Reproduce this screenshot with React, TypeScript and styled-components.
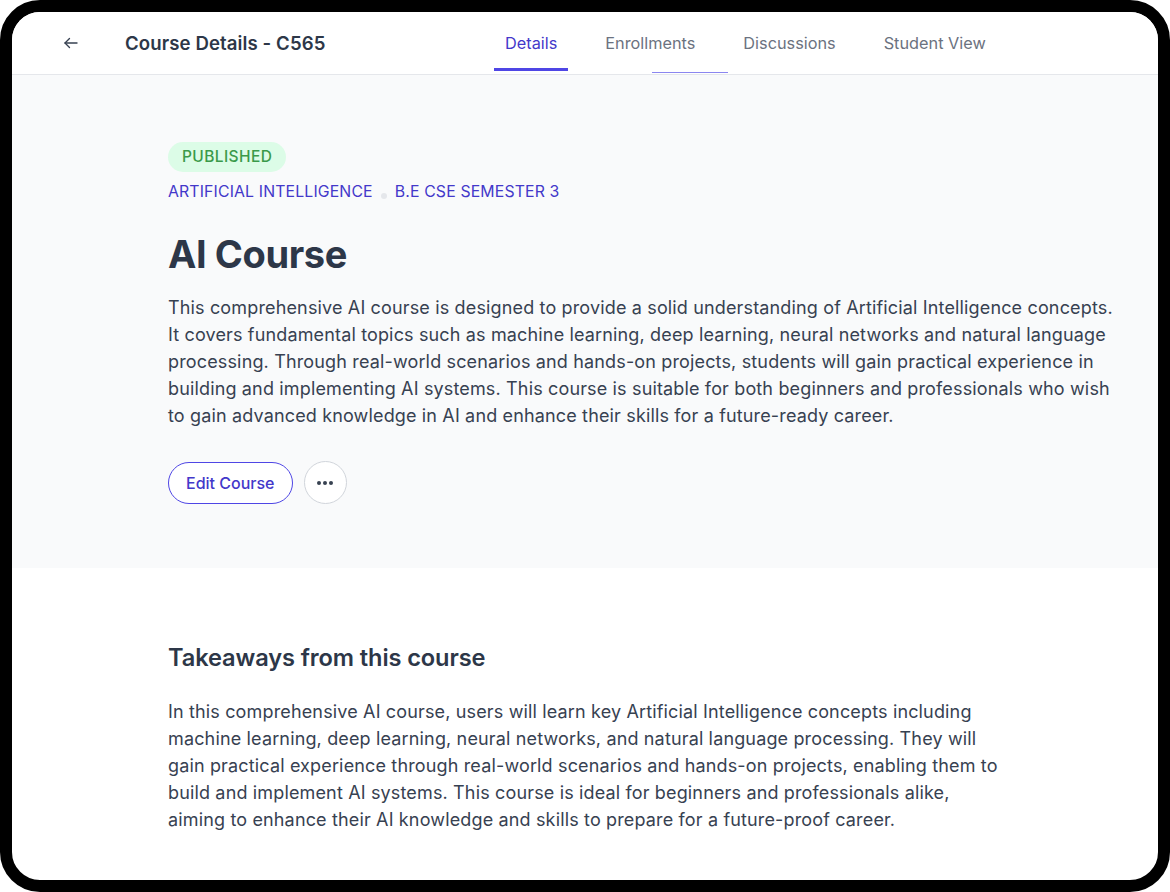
import React from 'react';
import styled, { createGlobalStyle } from 'styled-components';

const GlobalStyle = createGlobalStyle`
  * {
    box-sizing: border-box;
  }
  html, body {
    margin: 0;
    padding: 0;
    background: #ffffff;
    font-family: Inter, "Noto Sans", "Liberation Sans", sans-serif;
  }
`;

const Frame = styled.div`
  width: 1170px;
  height: 892px;
  border: 12px solid #000000;
  border-radius: 40px;
  overflow: hidden;
  background: #ffffff;
  display: flex;
  flex-direction: column;
`;

const Header = styled.header`
  height: 63px;
  flex-shrink: 0;
  display: flex;
  align-items: stretch;
  border-bottom: 1px solid #e5e7eb;
  background: #ffffff;
  padding-left: 49px;
`;

const BackButton = styled.button`
  border: none;
  background: none;
  padding: 0;
  width: 20px;
  display: flex;
  align-items: center;
  justify-content: center;
  color: #374151;
  cursor: pointer;
  margin-right: 44px;
`;

const PageTitle = styled.h1`
  margin: 0;
  align-self: center;
  font-size: 18.6px;
  font-weight: 600;
  letter-spacing: 0.1px;
  color: #2d3748;
  width: 369px;
`;

const Tabs = styled.nav`
  display: flex;
`;

const Tab = styled.a<{ $active?: boolean; $ghost?: boolean }>`
  position: relative;
  display: flex;
  align-items: center;
  padding: 0 11px;
  margin-right: 26px;
  font-size: 16.3px;
  color: ${({ $active }) => ($active ? '#4338ca' : '#6b7280')};
  text-decoration: none;
  cursor: pointer;

  &:after {
    content: '';
    position: absolute;
    left: ${({ $ghost }) => ($ghost ? '58px' : '0')};
    width: ${({ $ghost }) => ($ghost ? '76px' : '100%')};
    bottom: ${({ $active }) => ($active ? '3px' : '1px')};
    height: ${({ $active }) => ($active ? '3px' : '1px')};
    background: ${({ $active, $ghost }) => ($active ? '#4f46e5' : $ghost ? '#8b86f0' : 'transparent')};
  }
`;

const Hero = styled.section`
  background: #f9fafb;
  padding: 67px 0 64px 156px;
  flex-shrink: 0;
`;

const Badge = styled.span`
  display: inline-block;
  background: #dcfce7;
  color: #3a9a4a;
  font-size: 15.5px;
  font-weight: 500;
  letter-spacing: 0.4px;
  padding: 6px 14px;
  border-radius: 999px;
  line-height: 18px;
`;

const Crumbs = styled.div`
  margin-top: 10px;
  display: flex;
  align-items: center;
  gap: 8px;
  font-size: 15.8px;
  color: #4338ca;
  letter-spacing: 0.15px;
`;

const Dot = styled.span`
  width: 6px;
  height: 6px;
  border-radius: 50%;
  background: #e5e7eb;
  margin-top: 8px;
`;

const CourseTitle = styled.h2`
  margin: 30px 0 0;
  font-size: 38px;
  font-weight: 700;
  letter-spacing: -0.4px;
  color: #2d3748;
  line-height: 46px;
`;

const Description = styled.p`
  margin: 17px 0 0;
  width: 955px;
  font-size: 18px;
  letter-spacing: 0.15px;
  line-height: 27px;
  color: #374151;
`;

const Actions = styled.div`
  margin-top: 32px;
  display: flex;
  align-items: center;
  gap: 11px;
`;

const OutlineButton = styled.button`
  height: 42px;
  padding: 0 17px;
  border: 1.8px solid #4f46e5;
  border-radius: 999px;
  background: #ffffff;
  color: #4338ca;
  font-family: inherit;
  font-size: 16px;
  font-weight: 500;
  cursor: pointer;
`;

const IconButton = styled.button`
  width: 43px;
  height: 43px;
  border-radius: 50%;
  border: 1.5px solid #d1d5db;
  background: #ffffff;
  display: flex;
  align-items: center;
  justify-content: center;
  color: #374151;
  padding: 0;
  cursor: pointer;
`;

const Takeaways = styled.section`
  padding: 75px 0 0 156px;
`;

const SectionTitle = styled.h3`
  margin: 0;
  font-size: 23.6px;
  font-weight: 600;
  color: #2d3748;
  letter-spacing: -0.1px;
`;

const Body = styled.p`
  margin: 26px 0 0;
  width: 840px;
  font-size: 18px;
  letter-spacing: 0.15px;
  line-height: 27px;
  color: #374151;
`;

const ArrowLeft = () => (
  <svg width="18" height="18" viewBox="0 0 24 24" fill="none" stroke="currentColor" strokeWidth="1.8" strokeLinecap="round" strokeLinejoin="round">
    <path d="M20 12H4" />
    <path d="M10 6l-6 6 6 6" />
  </svg>
);

const Dots = () => (
  <svg width="18" height="6" viewBox="0 0 18 6" fill="currentColor">
    <circle cx="3" cy="3" r="2" />
    <circle cx="9" cy="3" r="2" />
    <circle cx="15" cy="3" r="2" />
  </svg>
);

export default function App() {
  return (
    <>
      <GlobalStyle />
      <Frame>
        <Header>
          <BackButton aria-label="Back">
            <ArrowLeft />
          </BackButton>
          <PageTitle>Course Details - C565</PageTitle>
          <Tabs>
            <Tab $active>Details</Tab>
            <Tab $ghost>Enrollments</Tab>
            <Tab>Discussions</Tab>
            <Tab>Student View</Tab>
          </Tabs>
        </Header>
        <Hero>
          <Badge>PUBLISHED</Badge>
          <Crumbs>
            <span>ARTIFICIAL INTELLIGENCE</span>
            <Dot />
            <span>B.E CSE SEMESTER 3</span>
          </Crumbs>
          <CourseTitle>AI Course</CourseTitle>
          <Description>
            This comprehensive AI course is designed to provide a solid understanding of Artificial Intelligence
            concepts. It covers fundamental topics such as machine learning, deep learning, neural networks and
            natural language processing. Through real-world scenarios and hands-on projects, students will gain
            practical experience in building and implementing AI systems. This course is suitable for both beginners
            and professionals who wish to gain advanced knowledge in AI and enhance their skills for a future-ready
            career.
          </Description>
          <Actions>
            <OutlineButton>Edit Course</OutlineButton>
            <IconButton aria-label="More">
              <Dots />
            </IconButton>
          </Actions>
        </Hero>
        <Takeaways>
          <SectionTitle>Takeaways from this course</SectionTitle>
          <Body>
            In this comprehensive AI course, users will learn key Artificial Intelligence concepts including machine
            learning, deep learning, neural networks, and natural language processing. They will gain practical
            experience through real-world scenarios and hands-on projects, enabling them to build and implement AI
            systems. This course is ideal for beginners and professionals alike, aiming to enhance their AI knowledge
            and skills to prepare for a future-proof career.
          </Body>
        </Takeaways>
      </Frame>
    </>
  );
}
